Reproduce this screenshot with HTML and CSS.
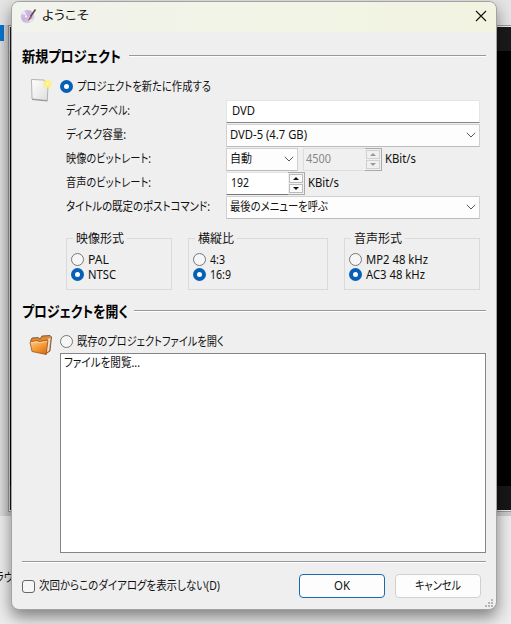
FILE: index.html
```html
<!DOCTYPE html>
<html lang="ja">
<head>
<meta charset="utf-8">
<title>ようこそ</title>
<link rel="stylesheet" href="styles.css">
</head>
<body>
<div class="desktop">
  <div class="back-top"><i class="selection"></i></div>
  <div class="back-frame"><div class="canvas"></div></div>
  <div class="back-bottom"><span>ラウ</span></div>
</div>
<main class="dialog">
  <header class="titlebar">
    <svg class="app-icon" width="17" height="16" viewBox="0 0 17 16"><defs><linearGradient id="disc" x2="1" y2="1"><stop offset="0" stop-color="#ddd5e5"/><stop offset=".45" stop-color="#c9b0da"/><stop offset="1" stop-color="#e4dce6"/></linearGradient></defs><circle cx="7.500" cy="8.500" r="6.800" fill="url(#disc)"/><path d="M7 8 1.500 5.500 4 2.500zM8 9l5 3-3 3z" fill="#eee5f5"/><circle cx="6" cy="8.500" r="1" fill="#fff"/><path d="M15.500 1.500 10.500 8.500" stroke="#58494e" stroke-width="1.600"/><path d="M10.500 7.500 7.500 13q3.500-1 4.500-4.500z" fill="#945e66"/></svg>
    <span class="t" data-w="47">ようこそ</span>
    <svg class="close" width="12" height="12" viewBox="0 0 12 12"><path d="M1 1 11 11M11 1 1 11" stroke="#111" stroke-width="1.1"/></svg>
  </header>
  <section class="new">
    <h2><span class="t" data-w="99">新規プロジェクト</span></h2>
    <div class="choice">
      <svg class="page-icon" width="23" height="24" viewBox="0 0 23 24"><defs><linearGradient id="sheet" x2="1" y2="1"><stop offset="0" stop-color="#fff"/><stop offset="1" stop-color="#dedede"/></linearGradient><radialGradient id="glow"><stop offset="0" stop-color="#fffbd0"/><stop offset=".4" stop-color="#fff06a"/><stop offset="1" stop-color="#fff27800"/></radialGradient></defs><path d="M1.500 1.500 14 2l4 5-.700 15.500L2 21z" fill="url(#sheet)" stroke="#a2a2a2" stroke-width=".8"/><path d="M2 21.500 17.500 23" stroke="#888" stroke-width=".8"/><circle cx="17.500" cy="6" r="5.500" fill="url(#glow)"/></svg>
      <label class="opt"><i class="radio on"></i><span class="t" data-w="134">プロジェクトを新たに作成する</span></label>
    </div>
    <div class="form">
      <span class="lab"><span class="t" data-w="64">ディスクラベル:</span></span>
      <div class="input wide"><span class="t" data-w="23">DVD</span></div>
      <span class="lab"><span class="t" data-w="60">ディスク容量:</span></span>
      <div class="combo wide"><span class="t" data-w="77">DVD-5 (4.7 GB)</span><svg class="chev" width="10" height="6"><path d="m.8.8 4.2 4.2L9.2.8"/></svg></div>
      <span class="lab"><span class="t" data-w="85">映像のビットレート:</span></span>
      <div class="cell"><div class="combo mode"><span class="t" data-w="22">自動</span><svg class="chev" width="10" height="6"><path d="m.8.8 4.2 4.2L9.2.8"/></svg></div><div class="spin disabled"><span class="t" data-w="25">4500</span><span class="arrows"><i><b class="up"></b></i><i><b class="down"></b></i></span></div><span class="t" data-w="31">KBit/s</span></div>
      <span class="lab"><span class="t" data-w="85">音声のビットレート:</span></span>
      <div class="cell"><div class="spin audio"><span class="t" data-w="18">192</span><span class="arrows"><i><b class="up"></b></i><i><b class="down"></b></i></span></div><span class="t" data-w="31">KBit/s</span></div>
      <span class="lab"><span class="t" data-w="144">タイトルの既定のポストコマンド:</span></span>
      <div class="combo wide"><span class="t" data-w="98">最後のメニューを呼ぶ</span><svg class="chev" width="10" height="6"><path d="m.8.8 4.2 4.2L9.2.8"/></svg></div>
    </div>
    <div class="groups">
      <div class="group"><div class="legend"><span class="t" data-w="48">映像形式</span></div><label class="opt"><i class="radio"></i><span class="t" data-w="21">PAL</span></label><label class="opt"><i class="radio on"></i><span class="t" data-w="28">NTSC</span></label></div>
      <div class="group"><div class="legend"><span class="t" data-w="36">横縦比</span></div><label class="opt"><i class="radio"></i><span class="t" data-w="15">4:3</span></label><label class="opt"><i class="radio on"></i><span class="t" data-w="21">16:9</span></label></div>
      <div class="group"><div class="legend"><span class="t" data-w="48">音声形式</span></div><label class="opt"><i class="radio"></i><span class="t" data-w="62">MP2 48 kHz</span></label><label class="opt"><i class="radio on"></i><span class="t" data-w="59">AC3 48 kHz</span></label></div>
    </div>
  </section>
  <section class="open">
    <h2><span class="t" data-w="106">プロジェクトを開く</span></h2>
    <div class="choice">
      <svg class="folder-icon" width="24" height="22" viewBox="0 0 24 22"><defs><linearGradient id="fold" x2=".7" y2="1"><stop offset="0" stop-color="#ffd498"/><stop offset=".5" stop-color="#f7a13d"/><stop offset="1" stop-color="#dc7313"/></linearGradient></defs><path d="m1.500 7 1.500-3 6-.500L11 5l2-3 8-.500 1.500 1.500-1.500 14-4.500 3z" fill="#dc8b3a" stroke="#744225" stroke-width=".8"/><path d="m18.500 5.500 3-2-1.500 13-2.500 2z" fill="#e8e5df"/><path d="m1 8 7-1.500 2 1 9-1.500-1.800 14.500L3 17.500z" fill="url(#fold)" stroke="#9d5319" stroke-width=".8"/><path d="m2 8.800 6-1 2 1 8-1.300" fill="none" stroke="#ffe2b3" stroke-width=".7"/></svg>
      <label class="opt"><i class="radio"></i><span class="t" data-w="147">既存のプロジェクトファイルを開く</span></label>
    </div>
    <div class="list"><span class="t" data-w="76">ファイルを閲覧...</span></div>
  </section>
  <footer>
    <label class="opt"><i class="check"></i><span class="t" data-w="181">次回からこのダイアログを表示しない(D)</span></label>
    <div class="button primary"><span class="t" data-w="16">OK</span></div>
    <div class="button"><span class="t" data-w="46">キャンセル</span></div>
  </footer>
  <svg class="grip" width="9" height="9" fill="#b5b5b5"><path d="M6 0h2v2H6zM3 3h2v2H3zM6 3h2v2H6zM0 6h2v2H0zM3 6h2v2H3zM6 6h2v2H6z"/></svg>
</main>
<script src="fit.js"></script>
</body>
</html>
```
FILE: styles.css
```css
* { box-sizing: border-box; }
body { margin: 0; width: 511px; height: 624px; overflow: hidden; position: relative; background: #eee; color: #111; font: 12px/16px "Noto Sans", "Noto Sans CJK JP", sans-serif; font-feature-settings: "palt"; }
i { font-style: normal; }
.t { display: inline-block; white-space: nowrap; transform-origin: 0 50%; flex: none; }
.desktop { display: flex; flex-direction: column; height: 624px; }
.back-top { height: 25px; background: #e5e5e5; flex: none; }
.selection { display: block; width: 4px; height: 16px; background: #0873ce; transform: translateY(25px); }
.back-frame { height: 491px; flex: none; padding: 0 0 4px 8px; background: linear-gradient(90deg, #dedede, #c9c9c9 8px, #ccc); }
.canvas { height: 487px; border: 1px solid #999; border-right: 0; box-shadow: inset 0 1px #eee, inset 0 -1px #eee, inset 1px 0 #ddd; background: linear-gradient(#1a1a1a 25px, #000 25px, #000 460px, #171717 460px); }
.back-bottom { flex: 1; background: #ededed; padding-top: 54px; }
.back-bottom span { display: block; transform: translateX(-5px) scaleX(.85); transform-origin: 0 0; }
.dialog { position: absolute; left: 11px; top: 1px; width: 486px; height: 609px; border: 1px solid #a3a3a3; border-radius: 8px; overflow: hidden; background: #efefef; box-shadow: 0 7px 16px #0007; display: flex; flex-direction: column; }
.titlebar { height: 30px; flex: none; display: flex; align-items: center; padding: 0 9px 2px 8px; background: linear-gradient(90deg, #f1f3ed, #f2f4e5 60%, #f2f3e1); }
.app-icon { margin-right: 5px; }
.close { margin-left: auto; }
section { display: flex; flex-direction: column; padding-left: 10px; }
h2 { margin: 0; height: 20px; width: 464px; display: flex; align-items: center; gap: 8px; font-size: 15px; font-weight: 700; line-height: 20px; color: #000; }
h2::after { content: ""; flex: 1; height: 1px; background: #999; border-bottom: 1px solid #fff; }
.new { padding-top: 14px; height: 269px; flex: none; }
.choice { display: flex; align-items: flex-start; }
.new .choice { height: 33px; padding: 12px 0 0 8px; }
.new .choice .opt { margin: 1px 0 0 7px; }
.opt { display: flex; align-items: center; gap: 4px; height: 15px; line-height: 14px; }
.group .opt .t { line-height: 12px; }
.radio { width: 13px; height: 13px; flex: none; border: 1px solid #777; border-radius: 50%; background: #f6f6f6; }
.radio.on { border: 4px solid #0560b6; background: #fff; }
.form { display: grid; grid-template-columns: 160px 254px; grid-auto-rows: 24px; margin: 0 0 1px 44px; align-items: center; }
.lab { display: flex; }
.input, .combo, .spin { height: 23px; display: flex; align-items: center; }
.input { border: 1px solid #e5e5e5; border-bottom: 1px solid #868686; background: #fff; padding-left: 5px; }
.combo { border: 1px solid #d0d0d0; border-bottom-color: #bbb; border-radius: 1px; background: #fdfdfd; padding: 0 3px; }
.chev { margin-left: auto; fill: none; stroke: #555; stroke-width: 1; }
.cell { display: flex; align-items: center; }
.mode { width: 72px; margin-right: 5px; }
.spin { width: 79px; padding-left: 4px; background: #fff; border: 1px solid #e4e4e4; border-bottom-color: #777; border-right: 0; margin-right: 3px; }
.spin.disabled { background: #f0f0f0; color: #888; border-color: #ddd; padding-left: 2px; }
.arrows { margin: -1px 0 -1px auto; width: 17px; height: 23px; padding: 1px; display: grid; gap: 1px; border: 1px solid #aaa; border-left: 0; background: #f0f0f0; }
.arrows i { border: 1px solid #bbb; background: #fafafa; display: grid; place-items: center; }
.arrows b { border: 3px solid transparent; border-top-width: 0; border-bottom: 3px solid #111; }
.arrows .down { border-bottom-width: 0; border-top: 3px solid #111; }
.disabled .arrows i { border-color: #d0d0d0; background: #f0f0f0; }
.disabled .arrows .up { border-bottom-color: #999; }
.disabled .arrows .down { border-top-color: #999; }
.groups { display: grid; grid-template-columns: 106px 140px 136px; gap: 16px; margin: 18px 0 0 44px; }
.group { border: 1px solid #dadada; height: 52px; padding-left: 4px; }
.legend { width: max-content; height: 16px; line-height: 16px; margin: -8px 0 5px 2px; padding: 0 3px; background: #efefef; display: flex; }
.open h2 { gap: 6px; }
.open .choice { height: 32px; padding: 13px 0 0 7px; }
.folder-icon { margin-right: 7px; }
.list { margin-left: 38px; width: 426px; height: 200px; background: #fff; border: 1px solid #82858a; padding: 1px 3px; display: flex; }
footer { width: 464px; margin: 8px 0 0 10px; border-top: 1px solid #999; box-shadow: inset 0 1px #fff; padding-top: 12px; display: flex; align-items: center; }
.check { width: 13px; height: 13px; border: 1px solid #666; border-radius: 3px; background: #f6f6f6; flex: none; }
footer .opt { width: 277px; flex: none; }
.button { width: 86px; height: 24px; border: 1px solid #d0d0d0; border-radius: 4px; background: #fdfdfd; display: flex; justify-content: center; align-items: center; flex: none; }
.primary { border: 1px solid #1769b1; margin-right: 10px; }
.grip { position: absolute; right: 2px; bottom: 1px; }
```
FILE: fit.js
```js
// Condense each label to its nominal UI width.
document.querySelectorAll('.t').forEach(function (el) {
  var natural = el.getBoundingClientRect().width;
  var wanted = Number(el.dataset.w);
  el.style.transform = 'scaleX(' + wanted / natural + ')';
  el.style.marginRight = (wanted - natural) + 'px';
});
```
